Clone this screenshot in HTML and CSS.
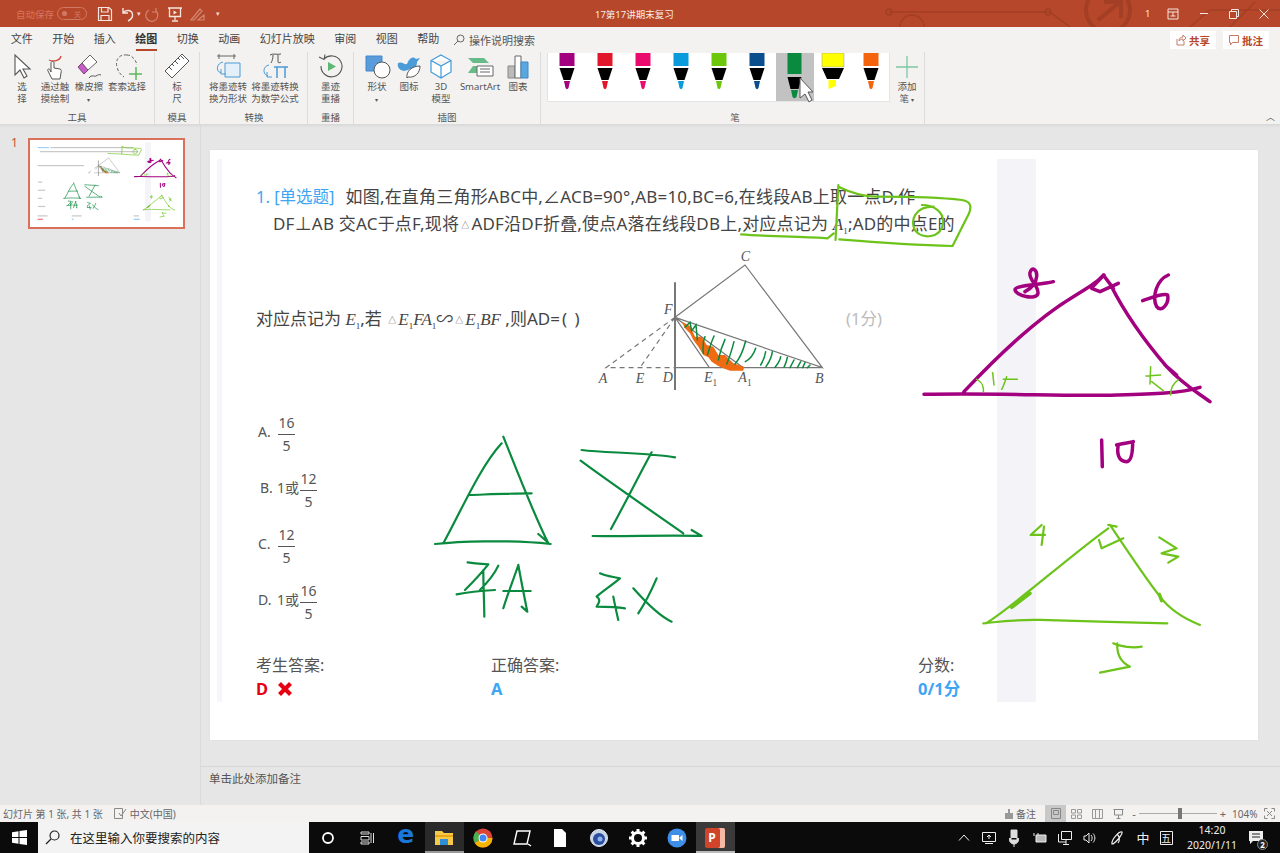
FILE: index.html
```html
<!DOCTYPE html>
<html lang="zh-CN">
<head>
<meta charset="utf-8">
<title>17第17讲期末复习</title>
<link rel="stylesheet" href="styles.css">
</head>
<body>
<div class="app">
  <header class="titlebar">
    <svg class="deco" viewBox="0 0 400 27" width="400" height="27"><g fill="none" stroke="#a23f24" stroke-width="1.5"><path d="M9 12H170L190 27"/><circle cx="9" cy="12" r="3"/><circle cx="168" cy="12" r="3"/><circle cx="228" cy="10" r="22" stroke-width="4"/><path d="M218 20L240 2M224 2H241V18" stroke-width="4"/><path d="M310 27L330 10H400M350 27L375 2"/><path d="M20 27A12 12 0 0 1 44 27"/></g></svg>
    <div class="qa">
      <span class="autosave">自动保存</span>
      <span class="pill"><i class="dot"></i><span>关</span></span>
      <svg class="qi save" width="16" height="16" viewBox="0 0 16 16"><path d="M1.500 1.500H12L14.500 4V14.500H1.500ZM4.500 1.500V6H11V1.500M4 14.500V9.500H12V14.500" fill="none" stroke="#f5e6e0" stroke-width="1.200"/></svg>
      <svg class="qi undo" width="16" height="16" viewBox="0 0 16 16"><path d="M4 2V7H9M4 7C7 3 13 4 13.500 8.500C13.800 11 12 13.500 9 15" fill="none" stroke="#f5e6e0" stroke-width="1.400"/></svg>
      <span class="qcaret">▾</span>
      <svg class="qi redo" width="16" height="16" viewBox="0 0 16 16"><path d="M11 2V6H7M11 5A6 6 0 1 1 4 4" fill="none" stroke="#d28673" stroke-width="1.200"/></svg>
      <svg class="qi present" width="16" height="16" viewBox="0 0 16 16"><path d="M1 2H15M2.500 2V10.500H13.500V2M8 10.500V14M5 15H11" fill="none" stroke="#f5e6e0" stroke-width="1.300"/><path d="M6.500 4.500L10 6.500L6.500 8.500Z" fill="#f5e6e0"/></svg>
      <svg class="qi pen" width="16" height="16" viewBox="0 0 16 16"><path d="M2 14L11 3L13 5L5 14ZM9 14H15V9Z" fill="none" stroke="#d28673" stroke-width="1.200"/></svg>
      <span class="qcaret last">▾</span>
    </div>
    <div class="doc-title">17第17讲期末复习</div>
    <div class="winbtns">
      <span class="wb w-user">1</span>
      <svg class="wb w-rb" width="12" height="12" viewBox="0 0 12 12"><path d="M1 1H11V11H1ZM1 4H11M6 4V8M3.500 8H8.500" fill="none" stroke="#f5e6e0"/></svg>
      <span class="wb w-min"></span>
      <svg class="wb w-res" width="10" height="10" viewBox="0 0 10 10"><path d="M.5 2.500H7.500V9.500H.5ZM2.500 2.500V.5H9.500V7.500H7.500" fill="none" stroke="#f5e6e0"/></svg>
      <svg class="wb w-x" width="10" height="10" viewBox="0 0 10 10"><path d="M.5.5L9.500 9.500M9.500.5L.5 9.500" stroke="#f5e6e0" stroke-width="1"/></svg>
    </div>
  </header>

  <nav class="tabs">
    <span class="tab">文件</span><span class="tab">开始</span><span class="tab">插入</span><span class="tab on">绘图</span><span class="tab">切换</span><span class="tab">动画</span><span class="tab">幻灯片放映</span><span class="tab">审阅</span><span class="tab">视图</span><span class="tab">帮助</span>
    <span class="tell"><svg width="12" height="12" viewBox="0 0 12 12"><circle cx="7.500" cy="4.500" r="3.500" fill="none" stroke="#666"/><path d="M5 7L1 11" stroke="#666"/></svg>操作说明搜索</span>
    <div class="tab-actions">
      <span class="act"><svg width="10" height="12" viewBox="0 0 10 12"><path d="M1 5V11H8V7M3 7C3 4 5 3 7 3V1L10 4L7 7V5C5 5 4 6 3 7Z" fill="none" stroke="#c77a66"/></svg>共享</span>
      <span class="act"><svg width="10" height="11" viewBox="0 0 10 11"><path d="M.5.5H9.500V7.500H3.500L1.500 10V7.500H.5Z" fill="none" stroke="#c77a66"/></svg>批注</span>
    </div>
  </nav>

  <section class="ribbon">
    <div class="group g-tools">
      <div class="items">
        <div class="rb b28"><svg class="ic" width="30" height="27" viewBox="0 0 30 27"><path d="M8 2V22L13 17L17 25L20 23L16 16H23Z" fill="#fff" stroke="#555" stroke-width="1.100"/></svg><span>选<br>择</span></div>
        <div class="rb b38"><svg class="ic" width="30" height="27" viewBox="0 0 30 27"><path d="M9 7C13 9 20 8 21 3" fill="none" stroke="#d2483a" stroke-width="1.300"/><path d="M12 26L8 18C7 16 9 15 10 17L11 19V10C11 8 14 8 14 10V15L20 16C21.500 16.500 21.500 18 21 20L20 26Z" fill="#fff" stroke="#555"/></svg><span>通过触<br>摸绘制</span></div>
        <div class="rb b30"><svg class="ic" width="30" height="27" viewBox="0 0 30 27"><path d="M4 14L10 21L14 17L8 10Z" fill="#c85fc8" stroke="#7b3d7b"/><path d="M8 10L16 2L23 9L14 17Z" fill="#fff" stroke="#666"/><path d="M15 25C18 21 20 24 22 23S25 21 27 22" fill="none" stroke="#555"/></svg><span>橡皮擦<br><b class="car">▾</b></span></div>
        <div class="rb b46"><svg class="ic" width="30" height="27" viewBox="0 0 30 27"><path d="M15 2C7 1 3 7 5 14C6 19 9 22 12 24M15 2C20 2 24 7 25 12" fill="none" stroke="#666" stroke-dasharray="3 2"/><path d="M24 14V27M17 21H30" stroke="#5cb85c" stroke-width="1.500"/></svg><span>套索选择</span></div>
      </div>
      <div class="glabel">工具</div>
    </div>
    <div class="group g-mold">
      <div class="items">
        <div class="rb b45"><svg class="ic" width="30" height="27" viewBox="0 0 30 27"><path d="M3 18L20 1L27 8L10 25Z" fill="#fff" stroke="#555"/><path d="M7 14L10 17M10 11L12 13M13 8L16 11M16 5L18 7M19 3L22 6" stroke="#555"/></svg><span>标<br>尺</span></div>
      </div>
      <div class="glabel">模具</div>
    </div>
    <div class="group g-conv">
      <div class="items">
        <div class="rb b46"><svg class="ic" width="30" height="27" viewBox="0 0 30 27"><path d="M4 3H23M6 1V6M21 1V6" stroke="#666"/><path d="M12 10H27V24H12Z" fill="#e3f0fa" stroke="#4a9bd8"/><path d="M10 9C4 10 2 18 8 20M8 16V21H13" fill="none" stroke="#4a9bd8"/></svg><span>将墨迹转<br>换为形状</span></div>
        <div class="rb b48"><svg class="ic" width="30" height="27" viewBox="0 0 30 27"><path d="M10 2C13 0 17 2 21 1M13 2C13 6 12 8 11 10M18 2V9C18 10 20 10 21 9" fill="none" stroke="#555"/><path d="M14 14H28M17 14V25M25 14V25" fill="none" stroke="#4a9bd8" stroke-width="1.500"/><path d="M9 12C3 13 2 21 8 23M7 19V24H12" fill="none" stroke="#4a9bd8"/></svg><span>将墨迹转换<br>为数学公式</span></div>
      </div>
      <div class="glabel">转换</div>
    </div>
    <div class="group g-replay">
      <div class="items">
        <div class="rb b46"><svg class="ic" width="30" height="27" viewBox="0 0 30 27"><path d="M8 6A10.500 10.500 0 1 1 5 13M3 4L8 6.500L9 1.500" fill="none" stroke="#555" stroke-width="1.100"/><path d="M12 9L20 13.500L12 18Z" fill="#5cb870"/></svg><span>墨迹<br>重播</span></div>
      </div>
      <div class="glabel">重播</div>
    </div>
    <div class="group g-ill">
      <div class="items">
        <div class="rb b34"><svg class="ic" width="30" height="27" viewBox="0 0 30 27"><path d="M4 3H20V18H4Z" fill="#5a9bdc" stroke="#4488cc"/><circle cx="20" cy="17" r="8" fill="#fff" stroke="#555"/></svg><span>形状<br><b class="car">▾</b></span></div>
        <div class="rb b30"><svg class="ic" width="30" height="27" viewBox="0 0 30 27"><path d="M4 10C8 8 10 12 13 11C15 5 19 3 22 6L26 5L23 9C23 13 21 15 17 16L10 18C5 17 3 14 4 10Z" fill="#4a9bd8"/><path d="M13 25C12 18 18 13 26 13C26 20 21 25 14 24Z" fill="#fff" stroke="#555"/></svg><span>图标</span></div>
        <div class="rb b34"><svg class="ic" width="30" height="27" viewBox="0 0 30 27"><path d="M15 2L25 7.500V19L15 25L5 19V7.500ZM5 7.500L15 13L25 7.500M15 13V25" fill="#fff" stroke="#3f9bd8" stroke-width="1.200"/></svg><span>3D<br>模型</span></div>
        <div class="rb b44"><svg class="ic" width="30" height="27" viewBox="0 0 30 27"><path d="M3 5H19L24 10H8ZM3 20L8 13H14V20Z" fill="#66bb88"/><path d="M12 13H28V23H12Z" fill="#fff" stroke="#666"/><path d="M15 16H25M15 19H25" stroke="#666"/></svg><span>SmartArt</span></div>
        <div class="rb b32"><svg class="ic" width="30" height="27" viewBox="0 0 30 27"><path d="M5 13H12V25H5Z" fill="#bbb" stroke="#888"/><path d="M12 3H18V25H12Z" fill="#fff" stroke="#666"/><path d="M18 9H25V25H18Z" fill="#5aa7e0" stroke="#3d88c4"/></svg><span>图表</span></div>
      </div>
      <div class="glabel">插图</div>
    </div>
    <div class="group g-pens">
      <div class="items">
        <div class="gallery">
          <div class="pencell"><svg width="38" height="48" viewBox="0 0 38 48"><use href="#pen" class="c-purple"/></svg></div>
          <div class="pencell"><svg width="38" height="48" viewBox="0 0 38 48"><use href="#pen" class="c-red"/></svg></div>
          <div class="pencell"><svg width="38" height="48" viewBox="0 0 38 48"><use href="#pen" class="c-pink"/></svg></div>
          <div class="pencell"><svg width="38" height="48" viewBox="0 0 38 48"><use href="#pen" class="c-blue"/></svg></div>
          <div class="pencell"><svg width="38" height="48" viewBox="0 0 38 48"><use href="#pen" class="c-lime"/></svg></div>
          <div class="pencell"><svg width="38" height="48" viewBox="0 0 38 48"><use href="#pen" class="c-navy"/></svg></div>
          <div class="pencell sel"><svg width="38" height="48" viewBox="0 0 38 48"><g class="c-green"><path d="M11.500 0H25.500V21H11.500Z" fill="var(--c)"/><path d="M11.500 24H25.500L22.500 36H14.500Z"/><path d="M15 37H22L20.500 44C19.500 45.500 17.500 45.500 16.500 44Z" fill="var(--c)"/></g></svg></div>
          <div class="pencell"><svg width="38" height="48" viewBox="0 0 38 48"><path d="M8 0H30V14H8Z" fill="#ffff00" stroke="#999" stroke-width=".5"/><path d="M8 15H30L25 26H13Z"/><path d="M14.500 27H22V33L14.500 36Z" fill="#ffff00"/></svg></div>
          <div class="pencell"><svg width="38" height="48" viewBox="0 0 38 48"><use href="#pen" class="c-orange"/></svg></div>
        </div>
        <div class="rb b35"><svg class="ic" width="30" height="27" viewBox="0 0 30 27"><path d="M15 3V25M4 14H26" stroke="#7cc8a0" stroke-width="1.300"/></svg><span>添加<br>笔 <b class="car">▾</b></span></div>
      </div>
      <div class="glabel">笔</div>
    </div>
    <span class="collapse">︿</span>
  </section>

  <main class="main">
    <aside class="thumbs">
      <span class="tnum">1</span>
      <div class="thumb">
        <svg width="152" height="86" viewBox="210 150 1048 590">
          <rect x="997" y="159" width="39" height="543" fill="#f3f3f8"/>
          <g fill="#c6c6c6"><rect x="345" y="190" width="570" height="8"/><rect x="273" y="218" width="677" height="8"/><rect x="256" y="314" width="320" height="8"/><rect x="258" y="428" width="30" height="8"/><rect x="258" y="484" width="50" height="8"/><rect x="258" y="540" width="30" height="8"/><rect x="258" y="596" width="50" height="8"/><rect x="256" y="661" width="68" height="8"/><rect x="491" y="661" width="68" height="8"/><rect x="918" y="661" width="36" height="8"/></g>
          <rect x="256" y="190" width="78" height="8" fill="#9ed0f7"/>
          <rect x="256" y="684" width="36" height="9" fill="#ee8080"/>
          <rect x="491" y="684" width="12" height="9" fill="#9ed0f7"/>
          <rect x="918" y="684" width="42" height="9" fill="#9ed0f7"/>
          <use href="#figlines" transform="translate(590 240) scale(.3333)"/>
          <use href="#inkall"/>
        </svg>
      </div>
    </aside>
    <div class="editor">
      <div class="stage">
        <article class="slide">
          <div class="stripe"></div>
          <div class="band"></div>
          <div class="q">
            <span class="qno">1. [单选题]</span><span class="qt">如图,在直角三角形ABC中,∠ACB=90°,AB=10,BC=6,在线段AB上取一点D,作</span><br>
            <span class="q2">DF⊥AB 交AC于点F,现将<span class="tri">△</span>ADF沿DF折叠,使点A落在线段DB上,对应点记为 <span class="m">A</span><span class="s">1</span>;AD的中点E的</span>
          </div>
          <div class="qrow">
            <div class="qtext">对应点记为 <span class="m">E</span><span class="s">1</span>,若 <span class="tri">△</span><span class="m">E</span><span class="s">1</span><span class="m">FA</span><span class="s">1</span>∽<span class="tri">△</span><span class="m">E</span><span class="s">1</span><span class="m">BF</span> ,则AD=<span class="par">( )</span></div>
            <svg class="fig" width="250" height="160" viewBox="0 0 750 480">
              <g id="figlines">
                <g class="fg"><path d="M255 127V450" class="fgv"/><path d="M255 232L465 75L697 383L255 232M255 383H697M255 232L358 383M255 232L460 383"/><path d="M255 232L48 383H255M255 232L150 383" stroke-dasharray="5 4"/></g>
                <path class="oran" d="M275 245L300 258L315 290L335 290L350 315L370 320L385 345L405 345L430 370L462 380L460 392L420 392L400 385L385 378L365 365L355 352L340 345L325 320L310 300L300 280L285 265Z"/>
                <path class="hatch" d="M285 262L300 247L305 272L318 255L322 300M345 290C338 305 338 320 340 340M372 288C362 310 358 330 352 345M405 298C395 320 388 345 385 360M432 305C425 330 420 350 410 372M467 303C460 330 450 355 435 372M497 325C492 340 480 358 466 365M527 335C525 350 518 365 512 375M547 335C545 355 535 370 528 380M572 350C570 365 560 375 555 382M592 352C590 365 585 375 582 382M612 360L600 383M632 365L622 383M645 368L638 383M660 375L652 383"/>
              </g>
              <g class="fl">
                <text x="452" y="64">C</text><text x="222" y="222">F</text><text x="26" y="428">A</text><text x="137" y="430">E</text><text x="218" y="425">D</text><text x="342" y="425">E<tspan class="flsub" dy="12">1</tspan></text><text x="445" y="425">A<tspan class="flsub" dy="12">1</tspan></text><text x="675" y="428">B</text>
              </g>
            </svg>
            <div class="score">(1分)</div>
          </div>
          <div class="opts">
            <div class="opt o-a"><span class="ol">A.</span><span class="fr"><span class="n">16</span><span class="d">5</span></span></div>
            <div class="opt o-b"><span class="ol">B.</span><span class="pre">1或</span><span class="fr"><span class="n">12</span><span class="d">5</span></span></div>
            <div class="opt o-a"><span class="ol">C.</span><span class="fr"><span class="n">12</span><span class="d">5</span></span></div>
            <div class="opt o-d"><span class="ol">D.</span><span class="pre">1或</span><span class="fr"><span class="n">16</span><span class="d">5</span></span></div>
          </div>
          <div class="answers">
            <div class="ans a1"><div class="al">考生答案:</div><div class="av red">D<svg class="cross" width="16" height="16" viewBox="0 0 16 16"><path d="M2.500 2.500L13.500 13.500M13.500 2.500L2.500 13.500" stroke="#e60012" stroke-width="4.200"/></svg></div></div>
            <div class="ans a2"><div class="al">正确答案:</div><div class="av blue">A</div></div>
            <div class="ans a3"><div class="al">分数:</div><div class="av blue">0/1分</div></div>
          </div>
        </article>
      </div>
      <div class="notes">单击此处添加备注</div>
    </div>
  </main>

  <footer class="status">
    <span>幻灯片 第 1 张, 共 1 张</span>
    <svg class="st-chk" width="13" height="11" viewBox="0 0 13 11"><path d="M.5.5H8.500V10.500H.5Z" fill="none" stroke="#888"/><path d="M5 5L7 8L12 1" fill="none" stroke="#888"/></svg>
    <span>中文(中国)</span>
    <div class="st-right">
      <svg class="st-n" width="8" height="10" viewBox="0 0 8 10"><path d="M3 0H5V4H8V10H0V4H3Z" fill="#999"/></svg>
      <span class="st-notes">备注</span>
      <span class="vw on"><svg width="10" height="11" viewBox="0 0 10 11"><path d="M.5.5H9.500V10.500H.5ZM2.500 2.500H7.500V6.500H2.500Z" fill="none" stroke="#888"/></svg></span>
      <span class="vw"><svg width="11" height="10" viewBox="0 0 11 10"><path d="M.5.5H4.500V4H.5ZM6.500.5H10.500V4H6.500ZM.5 6H4.500V9.500H.5ZM6.500 6H10.500V9.500H6.500Z" fill="none" stroke="#999"/></svg></span>
      <span class="vw"><svg width="11" height="10" viewBox="0 0 11 10"><path d="M.5.5H10.500V9.500H.5ZM3.500.5V9.500M7.500.5V9.500" fill="none" stroke="#999"/></svg></span>
      <span class="vw"><svg width="11" height="10" viewBox="0 0 11 10"><path d="M.5.5H10.500M1.500.5V6H9.500V.5M5.500 6V9M3.500 9.500H7.500" fill="none" stroke="#888"/></svg></span>
      <span class="zm z1">-</span>
      <span class="slider"><i></i></span>
      <span class="zm z2">+</span>
      <span class="pct">104%</span>
      <svg class="fit" width="11" height="11" viewBox="0 0 11 11"><path d="M.5 3.500V.5H3.500M7.500.5H10.500V3.500M10.500 7.500V10.500H7.500M3.500 10.500H.5V7.500M3 3L8 8M8 3L3 8" fill="none" stroke="#888"/></svg>
    </div>
  </footer>

  <div class="taskbar">
    <div class="start"><svg width="15" height="15" viewBox="0 0 15 15"><path d="M0 2.200L6.500 1.200V7H0ZM7.500 1L15 0V7H7.500ZM0 8H6.500V13.800L0 12.800ZM7.500 8H15V15L7.500 14Z" fill="#fff"/></svg></div>
    <div class="search"><svg width="15" height="15" viewBox="0 0 15 15"><circle cx="9.500" cy="5.500" r="4.500" fill="none" stroke="#222" stroke-width="1.200"/><path d="M6 9L1 14" stroke="#222" stroke-width="1.200"/></svg><span>在这里输入你要搜索的内容</span></div>
    <div class="tb"><svg width="16" height="16" viewBox="0 0 16 16"><circle cx="8" cy="8" r="5" fill="none" stroke="#fff" stroke-width="1.800"/></svg></div>
    <div class="tb"><svg width="16" height="16" viewBox="0 0 16 16"><path d="M2 2H10V4H2ZM2 6.500H10V10H2ZM2 12H10V14H2ZM12 3V13M14.500 3V13" fill="none" stroke="#ddd"/></svg></div>
    <div class="tb"><span class="edge">e</span></div>
    <div class="tb act1"><svg width="20" height="18" viewBox="0 0 20 18"><path d="M1 2H8L10 4H19V16H1Z" fill="#f7c948"/><path d="M1 6H19V8H1Z" fill="#e6a817"/><path d="M6 10H14V16H6Z" fill="#2d8fd5"/></svg></div>
    <div class="tb"><svg width="20" height="20" viewBox="0 0 20 20"><circle cx="10" cy="10" r="9.500" fill="#db4437"/><path d="M10 10L1.800 15A9.500 9.500 0 0 1 3 3.500Z" fill="#4caf50"/><path d="M10 10H19.500A9.500 9.500 0 0 1 10 19.500 9.500 9.500 0 0 1 1.800 15Z" fill="#f4b400"/><circle cx="10" cy="10" r="4.500" fill="#fff"/><circle cx="10" cy="10" r="3.500" fill="#4285f4"/></svg></div>
    <div class="tb"><svg width="20" height="18" viewBox="0 0 20 18"><path d="M5 2H18L15 15H2ZM16 15L19 17" fill="none" stroke="#fff" stroke-width="1.400"/></svg></div>
    <div class="tb"><svg width="14" height="18" viewBox="0 0 14 18"><path d="M1 0H9L13 4V18H1Z" fill="#fff"/></svg></div>
    <div class="tb"><svg width="20" height="20" viewBox="0 0 20 20"><circle cx="10" cy="10" r="8.500" fill="#c8d3e6" stroke="#dfe6f2"/><circle cx="10" cy="11" r="6" fill="#2b4f9e"/><circle cx="11" cy="11" r="2.500" fill="#8fb3ee"/></svg></div>
    <div class="tb"><svg width="18" height="18" viewBox="0 0 18 18"><circle cx="9" cy="9" r="5.500" fill="none" stroke="#fff" stroke-width="3"/><path d="M9 0V3.500M9 14.500V18M0 9H3.500M14.500 9H18M2.600 2.600L5 5M13 13L15.400 15.400M15.400 2.600L13 5M5 13L2.600 15.400" stroke="#fff" stroke-width="3"/></svg></div>
    <div class="tb"><svg width="20" height="20" viewBox="0 0 20 20"><circle cx="10" cy="10" r="9.500" fill="#3d8fe8"/><path d="M4.500 7H12V13H4.500ZM12.500 9.500L15.500 7V13L12.500 10.500Z" fill="#fff"/></svg></div>
    <div class="tb act2"><span class="pptic"><span>P</span></span></div>
    <div class="tray">
      <span class="ti"><svg width="12" height="7" viewBox="0 0 12 7"><path d="M1 6.500L6 1L11 6.500" fill="none" stroke="#eee"/></svg></span>
      <span class="ti"><svg width="14" height="12" viewBox="0 0 14 12"><path d="M.5.5H13.500V9.500H.5ZM3 11.500H11" fill="none" stroke="#eee"/><path d="M7 7V3M5 5L7 3L9 5" fill="none" stroke="#eee"/></svg></span>
      <span class="ti"><svg width="10" height="18" viewBox="0 0 10 18"><path d="M2 1H8V11H2ZM0 9C0 17 10 17 10 9M5 14V18" fill="#ddd" stroke="#ddd"/></svg></span>
      <span class="ti"><svg width="14" height="12" viewBox="0 0 14 12"><path d="M3 3H13V10H3ZM1 1V4M5 1V3" fill="#bbb" stroke="#eee"/></svg></span>
      <span class="ti"><svg width="14" height="14" viewBox="0 0 14 14"><path d="M3.500.5H13.500V8.500H3.500ZM.5 3V11H8M8 8.500V13M5 13.500H11" fill="none" stroke="#eee"/></svg></span>
      <span class="ti"><svg width="14" height="14" viewBox="0 0 14 14"><path d="M1 5H3L6 2V12L3 9H1ZM8 4C9.500 5.500 9.500 8.500 8 10M10 2.500C12.500 5 12.500 9 10 11.500" fill="none" stroke="#eee"/></svg></span>
      <span class="ti pn"><svg width="14" height="16" viewBox="0 0 14 16"><path d="M2 14C1 10 9 1 12 2C13 4 5 14 2 14ZM7 4C10 7 10 10 8 13" fill="none" stroke="#eee" stroke-width="1.200"/></svg></span>
      <span class="ti tt">中</span>
      <span class="ti tt5"><svg width="13" height="14" viewBox="0 0 13 14"><path d="M.5.5H12.500V13.500H.5Z" fill="none" stroke="#eee"/></svg><em>五</em></span>
      <div class="clock"><span>14:20</span><span>2020/1/11</span></div>
      <span class="noti"><svg width="16" height="15" viewBox="0 0 16 15"><path d="M1 1H15V11H5L2 14V11H1Z" fill="#eee"/><path d="M4 4H12M4 7H12" stroke="#222"/></svg><b>2</b></span>
    </div>
  </div>

  <svg class="ink" width="1280" height="853" viewBox="0 0 1280 853">
    <defs>
      <g id="pen"><path d="M11.500 0H26.500V13H11.500Z" fill="var(--c)"/><path d="M11.500 15H26.500L22.500 27H15.500Z" fill="#000"/><path d="M16 28H22L20.500 35C19.800 36.500 18.200 36.500 17.500 35Z" fill="var(--c)"/></g>
    </defs>
    <g id="inkall">
      <g transform="translate(900 260) scale(.3333)">
        <path class="p3" d="M192 395C300 280 420 170 520 110S590 60 612 45M632 75C680 170 740 250 800 320C850 375 890 395 930 425M72 403C300 398 500 410 650 405C760 402 840 400 900 382M575 85L600 95L655 70M578 80L612 45M610 45L640 85M795 315L830 345"/>
        <path class="p3" d="M460 65C420 75 350 75 345 88C345 108 410 122 414 100C416 75 385 60 390 38C395 18 412 28 410 50C408 70 395 85 375 95M805 45C770 60 755 110 770 140C785 160 808 130 803 105C790 98 750 115 728 122M605 540L607 620M650 555C670 550 690 548 700 545M655 555C650 580 655 605 680 605C695 603 698 570 698 548"/>
        <path class="l15" d="M230 358C245 365 252 380 250 395M278 338L282 375M320 350C315 365 310 380 305 388M310 358L352 358M738 348L782 345M752 320L750 372M755 365L790 392M835 360C820 370 812 385 812 405"/>
        <path class="l2" d="M258 1090C340 1040 500 895 625 805M630 795C680 870 740 960 780 1010C810 1050 850 1075 900 1095M250 1090C300 1085 350 1078 420 1080S700 1088 802 1090M597 840L605 865L670 835M625 795L650 800M425 795L392 825L435 825M432 800L425 855M778 832L830 865L785 880L835 890L805 908M725 1160C700 1165 660 1160 640 1150M652 1150C650 1180 660 1205 690 1220L600 1238"/>
        <path class="l3" d="M335 1042L390 1000M778 1003L785 1022"/>
      </g>
      <g transform="translate(240 400) scale(.3333)">
        <path class="d2" d="M610 430C660 340 720 200 785 130M790 110C830 210 880 340 925 430M585 432C650 425 800 418 932 432M688 285C750 283 820 280 875 280M895 402L925 428M1025 150C1100 160 1200 155 1305 172M1022 182C1100 240 1230 330 1330 400M1235 157C1190 240 1150 320 1113 387M1058 408C1150 410 1280 405 1385 408L1355 390"/>
        <path class="d2" d="M683 487C710 492 730 492 745 493C720 525 700 545 675 570M775 497C760 530 740 550 720 570M650 583C690 575 730 572 765 570M730 510C730 560 733 610 733 650M835 495C820 540 800 590 790 625M835 495C845 550 855 600 862 635L845 620M790 573L872 573"/>
        <path class="d2" d="M1080 520C1100 530 1120 530 1140 535C1110 560 1085 575 1070 590C1085 600 1075 610 1070 620C1100 620 1130 620 1155 625M1120 590C1125 615 1130 640 1135 660M1180 565C1220 610 1260 650 1295 665M1250 535C1235 570 1215 610 1195 640"/>
      </g>
      <g transform="translate(240 170) scale(.4719 .3333)">
        <path class="l2" d="M1268 45L1262 210M1268 50C1290 65 1320 80 1350 80C1420 80 1500 85 1530 90C1550 95 1550 110 1545 130L1510 228C1420 225 1330 215 1270 208M1062 193C1120 200 1200 200 1245 205L1258 190M1470 110C1430 110 1420 150 1430 180C1445 210 1485 205 1490 160C1492 125 1470 105 1445 105"/>
      </g>
    </g>
    <path class="cursor" d="M800 78V98L805 94L809 102L812 100L808 92H813Z"/>
  </svg>
</div>
</body>
</html>
```

FILE: styles.css
```css
* { box-sizing: border-box; }
html, body { margin: 0; padding: 0; }
body { width: 1280px; height: 853px; overflow: hidden; background: #e6e6e6; }
.app {
  position: relative; width: 1280px; height: 853px; display: flex; flex-direction: column;
  font-family: "Noto Sans", "Noto Sans CJK SC", sans-serif; color: #444;
}

/* title bar */
.titlebar { position: relative; flex: 0 0 27px; background: #b7472a; display: flex; align-items: center; overflow: hidden; }
.deco { position: absolute; left: 880px; top: 0; }
.qa { position: relative; display: flex; align-items: center; width: 595px; padding-left: 16px; }
.autosave { font-size: 9.500px; color: #d8765e; width: 41px; white-space: nowrap; }
.pill { width: 30px; height: 13px; border: 1px solid #cf7a64; border-radius: 7px; display: flex; align-items: center; justify-content: space-between; padding: 0 5px 0 4px; font-size: 7px; color: #cf7a64; }
.dot { width: 5px; height: 5px; border-radius: 50%; background: #cf7a64; }
.qi { flex: none; }
.save { margin-left: 10px; }
.undo { margin-left: 6px; }
.qcaret { font-size: 7px; color: #f0d8d0; margin-left: 2px; width: 8px; }
.redo { margin-left: 0; }
.present { margin-left: 6px; }
.pen { margin-left: 6px; }
.qcaret.last { margin-left: 11px; }
.doc-title { position: relative; font-size: 9.500px; color: #f8ece8; white-space: nowrap; }
.winbtns { position: relative; margin-left: auto; display: flex; align-items: center; height: 27px; width: 140px; }
.wb { flex: none; }
.w-user { font-size: 9.500px; color: #f5e6e0; width: 20px; margin-left: 5px; }
.w-rb { margin-right: 21px; margin-left: 2px; }
.w-min { width: 8px; height: 1px; background: #f5e6e0; margin-right: 21px; }
.w-res { margin-right: 20px; }

/* tabs */
.tabs { flex: 0 0 25px; background: #f3f2f1; display: flex; align-items: center; padding-left: 1px; }
.tab { font-size: 11px; padding: 0 9.750px; height: 25px; line-height: 24px; color: #444; white-space: nowrap; position: relative; }
.tab.on { font-weight: 700; color: #333; }
.tab.on::after { content: ""; position: absolute; left: 10px; right: 10px; bottom: 1px; height: 2px; background: #b7472a; }
.tell { display: flex; align-items: center; gap: 4px; font-size: 11px; margin-left: 4px; color: #555; white-space: nowrap; }
.tab-actions { margin-left: auto; display: flex; gap: 7px; padding-right: 11px; }
.act { width: 46px; height: 18px; background: #fff; display: flex; align-items: center; justify-content: center; gap: 3px; color: #b7472a; font-size: 10.500px; font-weight: 700; margin-top: 1px; white-space: nowrap; }

/* ribbon */
.ribbon { position: relative; flex: 0 0 72px; background: #f3f2f1; display: flex; box-shadow: 0 2px 2px #d9d9d9; z-index: 1; }
.group { display: flex; flex-direction: column; justify-content: space-between; border-right: 1px solid #dcdcdc; height: 72px; }
.items { display: flex; padding-top: 1px; }
.glabel { text-align: center; font-size: 9.500px; line-height: 13px; color: #555; height: 13px; }
.g-tools { width: 155px; padding-left: 8px; }
.g-tools .glabel { padding-right: 8px; }
.g-mold { width: 45px; }
.g-conv { width: 108px; padding-left: 5px; }
.g-conv .glabel { padding-right: 4px; }
.g-replay { width: 46px; }
.g-ill { width: 187px; padding-left: 6px; }
.g-ill .glabel { padding-right: 6px; }
.g-pens { width: 384px; padding-left: 6px; }
.g-pens .glabel { width: 376px; }
.rb { display: flex; flex-direction: column; align-items: center; font-size: 9.500px; line-height: 12px; color: #555; text-align: center; white-space: nowrap; }
.rb span { display: block; margin-top: 1px; }
.ic { display: block; flex: none; }
.car { font-size: 6px; font-weight: 400; color: #555; line-height: 12px; }
.b28 { width: 28px; } .b30 { width: 30px; } .b32 { width: 32px; } .b34 { width: 34px; } .b35 { width: 35px; }
.b38 { width: 38px; } .b44 { width: 44px; } .b45 { width: 44px; } .b46 { width: 46px; } .b48 { width: 48px; }
.gallery { width: 343px; height: 49px; display: flex; background: #fff; border: 1px solid #e4e4e4; border-top: 0; padding-left: 0; }
.pencell { width: 38px; height: 48px; flex: none; }
.pencell svg { display: block; }
.pencell.sel { background: #c2c2c2; }
.c-purple { --c: #a3007f; } .c-red { --c: #e2162b; } .c-pink { --c: #ea0a6d; } .c-blue { --c: #0a9bdc; }
.c-lime { --c: #6cc70a; } .c-navy { --c: #0a4e8e; } .c-green { --c: #0a8a3e; } .c-orange { --c: #f4640c; }
.collapse { position: absolute; right: 5px; bottom: 2px; font-size: 9px; line-height: 10px; color: #555; }

/* main */
.main { flex: 1; display: flex; min-height: 0; background: #e6e6e6; }
.thumbs { width: 201px; flex: none; border-right: 1px solid #dadada; padding: 14px 0 0 11px; display: flex; align-items: flex-start; }
.tnum { width: 17px; font-size: 12px; line-height: 10px; color: #c5553a; }
.thumb { width: 157px; height: 91px; border: 2px solid #d9705a; background: #fff; padding: .500px; flex: none; }
.thumb svg { display: block; --k: .3; }
.editor { flex: 1; display: flex; flex-direction: column; min-width: 0; }
.stage { flex: 1; padding: 26px 22px 0 9px; min-height: 0; }
.slide { position: relative; width: 1048px; height: 590px; background: #fff; padding: 33px 0 0 46px; box-shadow: 0 0 1px #cfcfcf; font-size: 16px; color: #444; }
.stripe { position: absolute; left: 7px; top: 9px; width: 5px; height: 543px; background: #f6f6fa; }
.band { position: absolute; left: 787px; top: 9px; width: 39px; height: 543px; background: #f3f3f8; }
.q { position: relative; line-height: 27px; height: 57px; white-space: nowrap; font-size: 17px; letter-spacing: .2px; }
.qno { color: #3ea5f5; letter-spacing: 0; font-size: 16.500px; }
.qt { margin-left: 11px; }
.q2 { margin-left: 17px; }
.tri { font-size: 8px; vertical-align: 2px; color: #555; margin: 0 2px; }
.m { font-family: "Liberation Serif", serif; font-style: italic; letter-spacing: 0; }
.s { font-family: "Liberation Serif", serif; font-size: 9px; vertical-align: -4px; }
.par { letter-spacing: 1.500px; margin-left: 2px; }
.qrow { position: relative; display: flex; align-items: center; height: 160px; }
.qtext { width: 334px; flex: none; white-space: nowrap; font-size: 17px; margin-top: -4px; }
.fig { display: block; flex: none; }
.fg { fill: none; stroke: #777; stroke-width: calc(1.200px * var(--k, 1)); }
.fg path, .hatch, .p3, .l2, .l3, .l15, .d2 { vector-effect: non-scaling-stroke; }
.fgv { stroke-width: calc(2px * var(--k, 1)); }
.oran { fill: #f06a12; }
.hatch { fill: none; stroke: #0a8a3e; stroke-width: calc(1.500px * var(--k, 1)); stroke-linecap: round; }
.fl text { font-family: "Liberation Serif", serif; font-style: italic; font-size: 42px; fill: #555; }
.flsub { font-size: 28px; font-style: normal; }
.score { margin-left: 6px; color: #bbb; font-size: 16.500px; margin-top: -4px; white-space: nowrap; }
.opts { position: relative; margin-top: 4px; }
.opt { height: 56px; display: flex; align-items: center; font-size: 14px; color: #555; white-space: nowrap; }
.ol, .pre { padding-bottom: 2px; }
.o-a .ol { margin-left: 2px; width: 21px; }
.o-b .ol { margin-left: 4px; width: 17px; }
.o-d .ol { margin-left: 2px; width: 19px; }
.pre { width: 24px; }
.fr { display: flex; flex-direction: column; align-items: center; width: 15px; line-height: 20px; font-size: 14px; padding-top: 4px; }
.n { border-bottom: 1px solid #555; padding: 0 .500px 1px; line-height: 21px; }
.d { line-height: 22px; }
.answers { position: relative; display: flex; margin-top: 25px; }
.ans { flex: none; }
.a1 { width: 235px; } .a2 { width: 427px; }
.al { line-height: 24px; font-size: 16px; color: #555; white-space: nowrap; }
.av { line-height: 24px; font-size: 16.500px; font-weight: 700; display: flex; align-items: center; white-space: nowrap; }
.red { color: #e60012; }
.blue { color: #3ea5f5; }
.cross { margin-left: 9px; }
.notes { flex: 0 0 39px; border-top: 1px solid #d6d6d6; padding: 4px 0 0 8px; font-size: 11.500px; line-height: 16px; color: #555; background: #e6e6e6; }

/* status bar */
.status { flex: 0 0 17px; background: #f3f2f1; display: flex; align-items: center; padding-left: 3px; font-size: 10px; color: #666; white-space: nowrap; }
.st-chk { margin: 0 3px 0 11px; }
.st-right { margin-left: auto; display: flex; align-items: center; height: 17px; }
.st-n { margin-right: 3px; }
.st-notes { width: 29px; }
.vw { width: 21px; height: 17px; display: flex; align-items: center; justify-content: center; flex: none; }
.vw.on { background: #c8c8c8; }
.zm { font-size: 11px; text-align: center; }
.z1 { width: 10px; }
.z2 { width: 12px; }
.slider { position: relative; width: 78px; height: 1px; background: #aaa; }
.slider i { position: absolute; left: 39px; top: -5px; width: 4px; height: 11px; background: #777; }
.pct { margin-left: 3px; width: 28px; }
.fit { margin: 0 5px 0 4px; }

/* taskbar */
.taskbar { flex: 0 0 31px; background: #0b0b0c; display: flex; align-items: center; }
.start { width: 38px; height: 31px; display: flex; align-items: center; justify-content: center; }
.search { width: 271px; height: 31px; background: #f3f3f3; display: flex; align-items: center; gap: 10px; padding-left: 7px; font-size: 12.500px; color: #222; white-space: nowrap; }
.tb { width: 38.700px; height: 31px; display: flex; align-items: center; justify-content: center; flex: none; }
.act1 { background: #2a2a2a; box-shadow: inset 0 -2px 0 #999; }
.act2 { background: #3a3a3a; box-shadow: inset 0 -2px 0 #bbb; }
.edge { font-family: "DejaVu Sans", sans-serif; font-weight: 700; font-size: 25px; line-height: 24px; color: #1a78d8; margin-top: -5px; }
.pptic { width: 20px; height: 20px; background: #d0452a; border-radius: 2px; display: flex; align-items: center; padding-left: 3px; font-size: 12px; font-weight: 700; color: #fff; box-shadow: inset -5px 0 0 #f3b8a6; }
.tray { margin-left: auto; display: flex; align-items: center; height: 31px; color: #eee; }
.ti { width: 25.300px; display: flex; align-items: center; justify-content: center; flex: none; position: relative; }
.pn { width: 28px; }
.tt { font-size: 13px; width: 24px; white-space: nowrap; }
.tt5 { width: 23px; }
.tt5 em { position: absolute; left: 6px; top: -1px; font-style: normal; font-size: 10px; line-height: 16px; }
.clock { width: 62px; display: flex; flex-direction: column; align-items: center; font-size: 10.500px; line-height: 15px; white-space: nowrap; color: #eee; margin-left: 3px; }
.noti { position: relative; width: 26px; display: flex; justify-content: center; margin-right: 11px; }
.noti b { position: absolute; right: 1px; bottom: -5px; width: 11px; height: 11px; border-radius: 50%; background: #222; border: 1px solid #888; font-size: 8px; line-height: 9px; text-align: center; color: #fff; }

/* handwriting overlay */
.ink { position: absolute; left: 0; top: 0; pointer-events: none; z-index: 2; }
#inkall path { fill: none; stroke-linecap: round; stroke-linejoin: round; }
.p3 { stroke: #a3007f; stroke-width: calc(3.500px * var(--k, 1)); }
.l2 { stroke: #6cc31a; stroke-width: calc(2.200px * var(--k, 1)); }
.l3 { stroke: #6cc31a; stroke-width: calc(3.500px * var(--k, 1)); }
.l15 { stroke: #6cc31a; stroke-width: calc(1.500px * var(--k, 1)); }
.d2 { stroke: #0a8a3e; stroke-width: calc(2.200px * var(--k, 1)); }
.ink .cursor { fill: #fff; stroke: #555; stroke-width: 1px; }
```
